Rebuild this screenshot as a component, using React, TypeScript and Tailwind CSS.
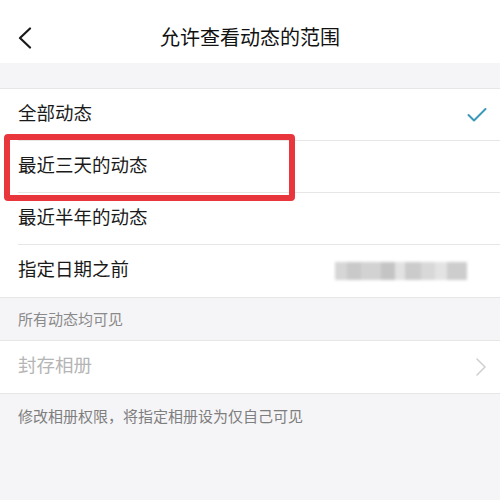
const font = { fontFamily: '"Noto Sans CJK SC", "Noto Sans", sans-serif' };

const BlurredDate = () => (
  <div className="flex h-[18px] w-[132px] blur-[1.5px]">
    <div className="w-[12px] bg-[#d6d6d6]" />
    <div className="w-[14px] bg-[#c9c9c9]" />
    <div className="w-[20px] bg-[#d2d2d2]" />
    <div className="w-[14px] bg-[#c4c4c4]" />
    <div className="w-[10px] bg-[#e2e2e2]" />
    <div className="w-[16px] bg-[#cbcbcb]" />
    <div className="w-[14px] bg-[#d8d8d8]" />
    <div className="w-[12px] bg-[#e3e3e3]" />
    <div className="w-[20px] bg-[#cdcdcd]" />
  </div>
);

const Row = ({ label, right, inset = true, muted = false }: { label: string; right?: React.ReactNode; inset?: boolean; muted?: boolean }) => (
  <div className="relative flex h-[52px] items-center justify-between bg-white pl-[18px] pr-[13px]">
    <span className={`relative -top-[3px] text-[18.5px] leading-none ${muted ? 'text-[#b5b5b5]' : 'text-[#1a1a1a]'}`}>{label}</span>
    {right}
    {inset && <div className="absolute bottom-0 left-[18px] right-0 h-px bg-[#e6e6e6]" />}
  </div>
);

export default function App() {
  return (
    <div className="flex h-[500px] w-[500px] flex-col overflow-hidden bg-[#f5f5f7]" style={font}>
      <div className="relative flex h-[63px] items-center justify-center bg-white pt-[10px]">
        <svg className="absolute left-[17px] top-[27px]" width="16" height="22" viewBox="0 0 16 22" fill="none">
          <path d="M13 1.5 L3 11 L13 20.5" stroke="#1a1a1a" strokeWidth="2.2" strokeLinecap="round" strokeLinejoin="round" />
        </svg>
        <span className="text-[20px] leading-none text-[#111]">允许查看动态的范围</span>
      </div>
      <div className="h-[25px]" />
      <div className="border-t border-[#e6e6e6]">
        <Row
          label="全部动态"
          right={
            <svg width="20" height="17" viewBox="0 0 20 17" fill="none">
              <path d="M1.5 8 L7 13.5 L18.5 2" stroke="#3a98b8" strokeWidth="2" strokeLinecap="round" strokeLinejoin="round" />
            </svg>
          }
        />
        <div className="relative z-10">
          <Row label="最近三天的动态" />
          <div className="absolute left-[4px] top-[-7px] h-[67px] w-[291px] rounded-[4px] border-[6px] border-[#e8363c]" />
        </div>
        <Row label="最近半年的动态" />
        <Row label="指定日期之前" right={<div className="mr-[20px]"><BlurredDate /></div>} inset={false} />
      </div>
      <div className="flex h-[43px] items-center border-t border-[#e6e6e6] pl-[18px] text-[15px] text-[#8a8a8a]">所有动态均可见</div>
      <div className="border-y border-[#e6e6e6]">
        <Row
          label="封存相册"
          muted
          inset={false}
          right={
            <svg width="12" height="20" viewBox="0 0 12 20" fill="none">
              <path d="M2 2 L10 10 L2 18" stroke="#d0d0d0" strokeWidth="1.6" strokeLinecap="round" strokeLinejoin="round" />
            </svg>
          }
        />
      </div>
      <div className="pl-[18px] pt-[11px] text-[15px] leading-[22px] text-[#7e7e7e]">修改相册权限，将指定相册设为仅自己可见</div>
    </div>
  );
}
